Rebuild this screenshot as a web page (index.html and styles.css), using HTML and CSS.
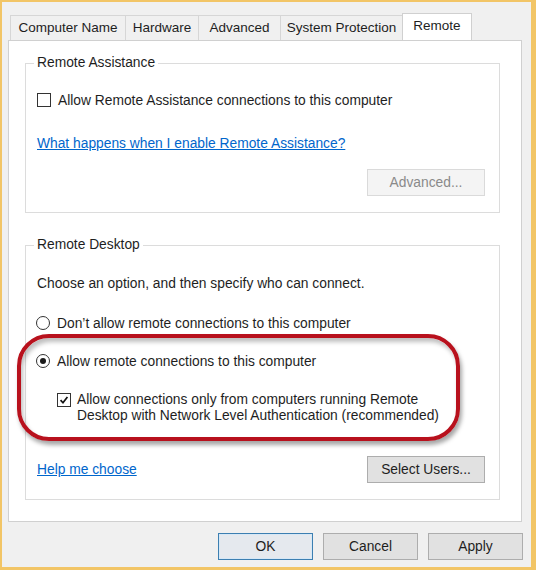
FILE: index.html
```html
<!DOCTYPE html>
<html>
<head>
<meta charset="utf-8">
<link rel="stylesheet" href="styles.css">
</head>
<body>
<div class="window">
  <div class="tabs">
    <div class="tab t1">Computer Name</div>
    <div class="tab t2">Hardware</div>
    <div class="tab t3">Advanced</div>
    <div class="tab t4">System Protection</div>
    <div class="tab t5 selected">Remote</div>
  </div>
  <div class="panel">
    <div class="group g1">
      <div class="group-title">Remote Assistance</div>
      <label class="row check-row ra-check">
        <span class="checkbox"></span>
        <span>Allow Remote Assistance connections to this computer</span>
      </label>
      <a class="link ra-link" href="#">What happens when I enable Remote Assistance?</a>
      <div class="btn-row ra-btns">
        <button class="btn disabled">Advanced...</button>
      </div>
    </div>
    <div class="group g2">
      <div class="group-title">Remote Desktop</div>
      <div class="row choose">Choose an option, and then specify who can connect.</div>
      <label class="row radio-row r1">
        <span class="radio"></span>
        <span>Don’t allow remote connections to this computer</span>
      </label>
      <label class="row radio-row r2">
        <span class="radio checked"></span>
        <span>Allow remote connections to this computer</span>
      </label>
      <label class="nla">
        <span class="checkbox checked">
          <svg viewBox="0 0 14 14" width="14" height="14"><path d="M3 7.2 L5.8 10.2 L11 3.6" fill="none" stroke="#111" stroke-width="2"/></svg>
        </span>
        <span class="nla-text">Allow connections only from computers running Remote<br>Desktop with Network Level Authentication (recommended)</span>
      </label>
      <div class="help-row">
        <a class="link" href="#">Help me choose</a>
        <button class="btn">Select Users...</button>
      </div>
    </div>
  </div>
  <div class="footer">
    <button class="btn fbtn default">OK</button>
    <button class="btn fbtn">Cancel</button>
    <button class="btn fbtn">Apply</button>
  </div>
  <div class="highlight"></div>
</div>
</body>
</html>
```

FILE: styles.css
```css
* { box-sizing: border-box; }
html, body { margin: 0; padding: 0; }
body {
  font-family: "Liberation Sans", Arial, sans-serif;
  font-size: 13.8px;
  color: #1e1e1e;
}
.window {
  position: relative;
  width: 536px;
  height: 570px;
  background: #f0f0f0;
  border-style: solid;
  border-color: #f2c566;
  border-width: 2px 5px 3px 2px;
  padding: 11px 9px 0 6px;
  display: flex;
  flex-direction: column;
}
.tabs {
  display: flex;
  align-items: flex-end;
  height: 28px;
  margin-bottom: -1px;
  padding-left: 2px;
}
.tab {
  height: 25px;
  margin-bottom: 1px;
  border: 1px solid #d6d6d6;
  border-bottom: none;
  background: #f0f0f0;
  display: flex;
  align-items: center;
  justify-content: center;
  line-height: 16px;
  margin-left: -1px;
  padding-top: 0;
  font-size: 13.5px;
}
.tab.t1 { width: 116px; margin-left: 0; }
.tab.t2 { width: 74px; }
.tab.t3 { width: 83px; }
.tab.t4 { width: 123px; }
.tab.t5 { width: 70px; }
.tab.selected {
  height: 28px;
  margin-bottom: 0;
  background: #fff;
  border-color: #d0d0d0;
  padding-top: 0;
  padding-bottom: 4px;
}
.panel {
  background: #fff;
  border: 1px solid #d0d0d0;
  padding: 22px 21px 21px 16px;
}
.group {
  border: 1px solid #dcdcdc;
  padding: 0 14px 16px 11px;
}
.g2 { margin-top: 32px; }
.group-title {
  margin-top: -9px;
  margin-left: -3px;
  padding: 0 3px;
  width: max-content;
  background: #fff;
  line-height: 16px;
}
.row {
  display: flex;
  align-items: center;
  height: 20px;
}
.ra-check { margin-top: 19px; }
.checkbox {
  width: 14px;
  height: 14px;
  border: 1px solid #333;
  background: #fff;
  margin-right: 7px;
  flex: none;
  display: flex;
  align-items: center;
  justify-content: center;
}
.checkbox svg { display: block; }
.link {
  display: block;
  color: #0066cc;
  text-decoration: underline;
  line-height: 20px;
  width: max-content;
}
.ra-link { margin-top: 24px; }
.btn-row {
  display: flex;
  justify-content: flex-end;
}
.ra-btns { margin-top: 15px; }
.btn {
  font-family: inherit;
  font-size: 13.8px;
  color: #1e1e1e;
  height: 27px;
  width: 118px;
  background: #e1e1e1;
  border: 1px solid #adadad;
  padding: 0;
  border-radius: 0;
}
.btn.disabled {
  background: #f4f4f4;
  border-color: #dadada;
  color: #8a8a8a;
}
.choose { margin-top: 20px; }
.r1 { margin-top: 20px; }
.r2 { margin-top: 18px; }
.radio {
  width: 14px;
  height: 14px;
  border: 1px solid #333;
  border-radius: 50%;
  background: #fff;
  margin-right: 7px;
  flex: none;
  display: flex;
  align-items: center;
  justify-content: center;
}
.radio.checked::after {
  content: "";
  width: 6px;
  height: 6px;
  border-radius: 50%;
  background: #1a1a1a;
}
.radio-row { margin-left: -1px; }
.nla {
  display: flex;
  align-items: flex-start;
  margin-top: 21px;
  margin-left: 20px;
  line-height: 16px;
}
.nla .checkbox { margin-top: 1px; margin-right: 6px; }
.help-row {
  display: flex;
  justify-content: space-between;
  align-items: center;
  margin-top: 32px;
}
.footer {
  display: flex;
  justify-content: flex-end;
  gap: 10px;
  margin-top: 11px;
  margin-right: -1px;
}
.fbtn { width: 95px; }
.fbtn.default {
  border-color: #3c7fb1;
  box-shadow: inset 0 0 0 1px #d7e8f6;
  background: #e5e9ee;
}
.highlight {
  position: absolute;
  left: 15px;
  top: 332px;
  width: 443px;
  height: 107px;
  border: 4px solid #b8111d;
  border-radius: 32px;
  box-shadow: 2px 4px 4px rgba(0,0,0,0.35), inset 2px 4px 4px rgba(0,0,0,0.25);
  pointer-events: none;
}
```
